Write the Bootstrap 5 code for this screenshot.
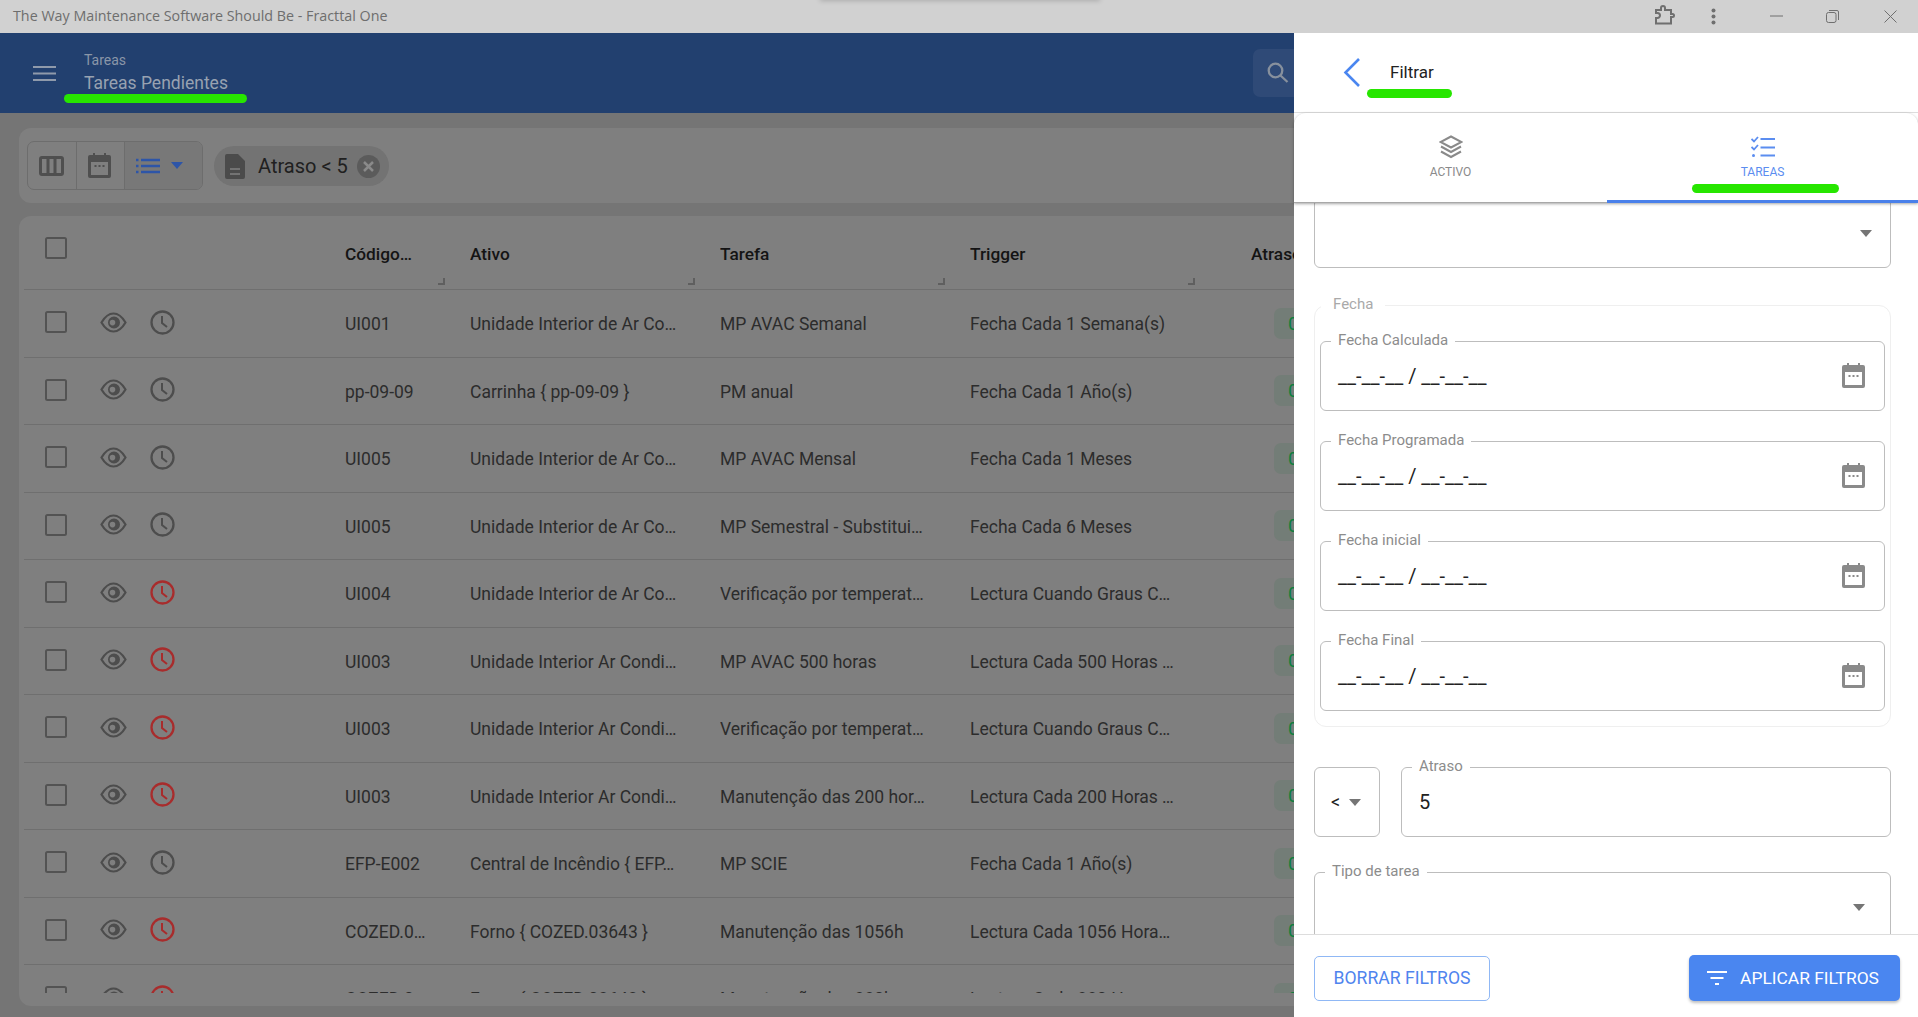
<!DOCTYPE html>
<html lang="es">
<head>
<meta charset="utf-8">
<title>Fractal One</title>
<link rel="stylesheet" href="https://cdn.jsdelivr.net/npm/bootstrap@5.3.0/dist/css/bootstrap.min.css">
<style>
html,body{height:100%;}
body{font-family:Roboto,"Liberation Sans",sans-serif;background:#757575;overflow:hidden;}
.app-frame{height:1017px;width:1918px;overflow:hidden;}
.win-bar{height:33px;background:#d1d1d1;color:#6e6e6e;font:14.3px/1 "Open Sans",sans-serif;padding:0 0 0 13px;}
.win-glow{position:absolute;left:820px;top:-6px;width:280px;height:6px;box-shadow:0 1px 5px rgba(0,0,0,.18);}
.win-btns{color:#6f6f6f;}
.win-btns svg{position:absolute;}
.w-puz{left:1654px;top:5px;}
.w-dots{left:1711px;top:8px;}
.w-min{left:1770px;top:15px;}
.w-res{left:1826px;top:10px;}
.w-cls{left:1884px;top:10px;}
.app-head{height:80px;background:#22406f;position:relative;flex:none;}
.burger{position:absolute;left:33px;top:33px;color:#8f9aab;}
.head-titles{position:absolute;left:84px;top:17px;}
.head-sup{font-size:14px;line-height:20px;color:#8a96a8;}
.head-main{font-size:17.5px;line-height:24px;margin-top:1px;color:#98a2b1;}
.search-box{position:absolute;left:1253px;top:16px;width:80px;height:48px;background:#2f4a77;border-radius:7px;color:#87909d;}
.search-box svg{position:absolute;left:13px;top:12px;}
.main-area{flex:1;background:#757575;padding:15px 0 0 19px;min-height:0;}
.tool-card{height:75px;width:1880px;background:#7f7f7f;border-radius:12px;padding:13px 0 0 8px;}
.tool-grp{height:49px;width:176px;border:1px solid #6d6d6d;border-radius:7px;overflow:hidden;}
.tool-cell{height:100%;display:flex;align-items:center;justify-content:center;color:#4f4f4f;border-right:1px solid #6d6d6d;padding-right:2px;}
.tc-a{width:49px;}
.tc-b{width:48px;}
.tc-c{flex:1;background:#787878;border-right:0;color:#2d55a8;gap:11px;padding-right:8px;}
.caret-d{width:0;height:0;border-left:6px solid transparent;border-right:6px solid transparent;border-top:7px solid currentColor;display:block;}
.flt-chip{margin:5px 0 0 11px;height:40px;width:175px;background:#737373;border-radius:20px;color:#202020;font-size:20px;padding-left:11px;}
.flt-chip .chip-doc{color:#4b4b4b;margin-right:13px;flex:none;}
.chip-x{margin-left:9px;color:#5b5b5b;flex:none;}
.grid-card{margin-top:13px;height:790px;width:1880px;background:#7f7f7f;border-radius:12px;padding:0 0 13px 5px;}
.grid-clip{height:777px;overflow:hidden;}
.grid-tbl{table-layout:fixed;width:1496px;margin:0;border-collapse:separate;border-spacing:0;--bs-table-bg:transparent;--bs-table-color:#2c2c2c;}
.grid-tbl th,.grid-tbl td{padding:0;vertical-align:middle;white-space:nowrap;overflow:hidden;border-bottom:1px solid #6f6f6f;box-shadow:none;}
.grid-tbl th{height:74px;font-weight:500;font-size:17.3px;color:#141414;position:relative;padding-top:4px;}
.grid-tbl td{height:67.5px;font-size:17.5px;color:#2c2c2c;padding-top:2px;}
.c-act{width:321px;}
.c-cod{width:125px;}
.c-lng{width:250px;}
.c-trg{width:281px;}
.c-atr{width:269px;}
.act-flex{display:flex;align-items:center;height:100%;padding-left:21px;color:#4d4d4d;position:relative;top:-2px;}
.chk-box{width:22px;height:22px;border:2.5px solid #535353;border-radius:2.5px;flex:none;}
.ico-eye{margin-left:33px;flex:none;}
.ico-clk{margin-left:23px;flex:none;}
.clk-red{color:#a82c2c;}
.head-chk{position:absolute;left:21px;top:21px;}
.rsz{position:absolute;right:25px;bottom:4px;width:7px;height:7px;border-right:2px solid #5f5f5f;border-bottom:2px solid #5f5f5f;}
.rsz-trg{right:56px;}
.late-chip{margin:-2px 0 0 23px;width:80px;height:31px;line-height:31px;background:#737d77;border-radius:7px;color:#0d7f3e;font-size:19px;padding-left:14px;}
.side-panel{position:absolute;right:0;top:33px;bottom:0;width:624px;background:#fff;display:flex;flex-direction:column;}
.side-head{height:80px;flex:none;border-bottom:1px solid #ddd;position:relative;font-size:17px;color:#222;}
.back-ico{position:absolute;left:49px;top:24px;color:#4a86f0;}
.side-ttl{position:absolute;left:96px;top:27px;line-height:24px;}
.side-tabs{height:90px;flex:none;position:relative;z-index:2;box-shadow:0 1px 3px rgba(0,0,0,.35);flex-wrap:nowrap;border-radius:12px 12px 0 0;}
.side-tabs .nav-link{padding:22px 0 0;height:90px;text-align:center;font-size:12px;line-height:16px;color:#8a8a8a;border-bottom:1px solid #a8a8a8;}
.tab-a{width:313px;}
.tab-b{width:311px;}
.side-tabs .tab-b{color:#5b8df0;border-bottom:3px solid #4a80ea;}
.side-tabs svg{display:block;margin:0 auto 5px;}
.side-body{height:731px;flex:none;overflow:hidden;padding:0 27px 0 20px;}
.side-scroll{margin-top:-5px;display:flex;flex-direction:column;}
.fld{height:70px;border:1px solid #bdbdbd;border-radius:6px;position:relative;flex:none;color:#222;font-size:20px;}
.fld-lbl{position:absolute;top:-12px;left:10px;background:#fff;padding:0 7px;font-size:15px;line-height:20px;color:#8c8c8c;}
.fld-val{position:absolute;left:17px;top:22px;line-height:24px;white-space:pre;}
.fld-cal{position:absolute;right:19px;top:21px;color:#8a8a8a;}
.fld-arrow{position:absolute;top:31px;right:18px;color:#757575;}
.arrow-wide{right:25px;}
.grp-fecha{margin-top:37px;height:422px;border:1px solid #efefef;border-radius:12px;padding:35px 5px 0;display:flex;flex-direction:column;gap:30px;position:relative;}
.grp-lbl{position:absolute;top:-12px;left:6px;background:#fff;padding:0 12px;font-size:15px;line-height:20px;color:#a9a9a9;}
.cmp-row{margin-top:40px;gap:21px;}
.cmp-op{width:66px;}
.cmp-val{flex:1;}
.op-txt{position:absolute;left:16px;top:22px;line-height:24px;font-size:18px;}
.tipo-fld{margin-top:35px;}
.side-foot{flex:1;border-top:1px solid #ddd;padding:20px 18px 0 20px;background:#fff;position:relative;z-index:2;}
.foot-out{width:176px;height:45px;margin-top:1px;border:1px solid #90b8f5;border-radius:5px;color:#4f84ee;background:#fff;font-size:17.6px;line-height:43px;padding:0;}
.foot-fill{width:211px;height:46px;border:0;border-radius:5px;background:#4a86f0;color:#fff;font-size:17.4px;padding:0 3px 0 0;box-shadow:0 2px 3px rgba(0,0,0,.25);gap:13px;}
.gmark{position:absolute;background:#27e600;border-radius:5px;z-index:5;}
.gm-a{left:64px;top:94px;width:183px;height:9px;}
.gm-b{left:1367px;top:89px;width:85px;height:9px;}
.gm-c{left:1692px;top:184px;width:147px;height:9px;}
</style>
</head>
<body>
<svg width="0" height="0" class="position-absolute">
  <defs>
    <symbol id="i-eye" viewBox="0 0 27 21"><path d="M1.500 10.500C5 4.500 9 1.500 13.500 1.500S22 4.500 25.500 10.500C22 16.500 18 19.500 13.500 19.500S5 16.500 1.500 10.500Z" fill="none" stroke="currentColor" stroke-width="2.200"/><path fill-rule="evenodd" d="M14 4.500a6 6 0 1 1 0 12a6 6 0 1 1 0-12ZM12.500 7.800a2.800 2.800 0 1 0 0 5.600a2.800 2.800 0 1 0 0-5.600Z" fill="currentColor"/></symbol>
    <symbol id="i-clk" viewBox="0 0 25 25"><circle cx="12.500" cy="12.500" r="11" fill="none" stroke="currentColor" stroke-width="2.300"/><path d="M12 6v7l5 4" fill="none" stroke="currentColor" stroke-width="2"/></symbol>
    <symbol id="i-cal" viewBox="0 0 23 25"><path fill-rule="evenodd" d="M5 0h2v2h9V0h2v2h3a2 2 0 0 1 2 2v19a2 2 0 0 1-2 2H2a2 2 0 0 1-2-2V4a2 2 0 0 1 2-2h3ZM3 9v13h17V9Z" fill="currentColor"/><rect x="6.500" y="12" width="2" height="2" fill="currentColor"/><rect x="10.500" y="12" width="2" height="2" fill="currentColor"/><rect x="14.500" y="12" width="2" height="2" fill="currentColor"/></symbol>
  </defs>
</svg>
<div class="app-frame d-flex flex-column position-relative">
  <div class="win-bar d-flex align-items-center flex-none position-relative">
    <span>The Way Maintenance Software Should Be - Fracttal One</span>
    <div class="win-glow"></div>
    <div class="win-btns">
      <svg class="w-puz" width="21" height="20" viewBox="0 0 21 20"><path d="M2 5h5V3a2 2 0 0 1 4 0v2h6v4h1.500a1.500 1.500 0 0 1 0 3H17v6.500H2v-5.500h1.500a2.500 2.500 0 0 0 0-5H2Z" fill="none" stroke="currentColor" stroke-width="2"/></svg>
      <svg class="w-dots" width="5" height="17" viewBox="0 0 5 17"><circle cx="2.500" cy="2.500" r="2" fill="currentColor"/><circle cx="2.500" cy="8.500" r="2" fill="currentColor"/><circle cx="2.500" cy="14.500" r="2" fill="currentColor"/></svg>
      <svg class="w-min" width="13" height="2" viewBox="0 0 13 2"><path d="M0 1h13" stroke="currentColor"/></svg>
      <svg class="w-res" width="13" height="13" viewBox="0 0 13 13"><rect x=".5" y="2.500" width="9.500" height="10" rx="2" fill="none" stroke="currentColor"/><path d="M3 .5h8a1.500 1.500 0 0 1 1.500 1.500v8" fill="none" stroke="currentColor"/></svg>
      <svg class="w-cls" width="13" height="13" viewBox="0 0 13 13"><path d="M.5.500l12 12M12.500.500l-12 12" stroke="currentColor"/></svg>
    </div>
  </div>
  <header class="app-head">
    <svg class="burger" width="23" height="15" viewBox="0 0 23 15"><path d="M0 1h23M0 7.500h23M0 14h23" stroke="currentColor" stroke-width="2"/></svg>
    <div class="head-titles">
      <div class="head-sup">Tareas</div>
      <div class="head-main">Tareas Pendientes</div>
    </div>
    <div class="search-box"><svg width="24" height="24" viewBox="0 0 24 24"><circle cx="9.500" cy="9.500" r="6.800" fill="none" stroke="currentColor" stroke-width="2.300"/><path d="M14.500 14.500l7 6.500" stroke="currentColor" stroke-width="2.300"/></svg></div>
  </header>
  <main class="main-area">
    <div class="tool-card d-flex">
      <div class="tool-grp d-flex">
        <div class="tool-cell tc-a"><svg width="25" height="20" viewBox="0 0 25 20"><rect x="1.500" y="1.500" width="22" height="17" rx="1.500" fill="none" stroke="currentColor" stroke-width="3"/><path d="M9 1v18M16 1v18" stroke="currentColor" stroke-width="3"/></svg></div>
        <div class="tool-cell tc-b"><svg width="23" height="25"><use href="#i-cal"/></svg></div>
        <div class="tool-cell tc-c"><svg width="24" height="16" viewBox="0 0 24 16"><path d="M5 2h19M5 8h19M5 14h19" stroke="currentColor" stroke-width="2.400"/><path d="M0 2h2.500M0 8h2.500M0 14h2.500" stroke="currentColor" stroke-width="2.400"/></svg><span class="caret-d"></span></div>
      </div>
      <div class="flt-chip d-flex align-items-center">
        <svg class="chip-doc" width="20" height="25" viewBox="0 0 20 25"><path fill-rule="evenodd" d="M2 0h11l7 7v16a2 2 0 0 1-2 2H2a2 2 0 0 1-2-2V2a2 2 0 0 1 2-2ZM5 14v2h10v-2ZM5 19v2h10v-2Z" fill="currentColor"/></svg>
        <span>Atraso &lt; 5</span>
        <svg class="chip-x" width="23" height="23" viewBox="0 0 23 23"><circle cx="11.500" cy="11.500" r="11.500" fill="currentColor"/><path d="M7 7l9 9M16 7l-9 9" stroke="#8a8a8a" stroke-width="2.500"/></svg>
      </div>
    </div>
    <div class="grid-card">
      <div class="grid-clip">
        <table class="table grid-tbl">
          <colgroup><col class="c-act"><col class="c-cod"><col class="c-lng"><col class="c-lng"><col class="c-trg"><col class="c-atr"></colgroup>
          <thead><tr>
            <th><span class="chk-box head-chk d-block"></span></th>
            <th>Código…<span class="rsz"></span></th>
            <th>Ativo<span class="rsz"></span></th>
            <th>Tarefa<span class="rsz"></span></th>
            <th>Trigger<span class="rsz rsz-trg"></span></th>
            <th>Atraso</th>
          </tr></thead>
          <tbody>
            <tr><td><div class="act-flex"><span class="chk-box"></span><svg class="ico-eye" width="27" height="21"><use href="#i-eye"/></svg><svg class="ico-clk" width="25" height="25"><use href="#i-clk"/></svg></div></td><td>UI001</td><td>Unidade Interior de Ar Co…</td><td>MP AVAC Semanal</td><td>Fecha Cada 1 Semana(s)</td><td><div class="late-chip">0</div></td></tr>
            <tr><td><div class="act-flex"><span class="chk-box"></span><svg class="ico-eye" width="27" height="21"><use href="#i-eye"/></svg><svg class="ico-clk" width="25" height="25"><use href="#i-clk"/></svg></div></td><td>pp-09-09</td><td>Carrinha { pp-09-09 }</td><td>PM anual</td><td>Fecha Cada 1 Año(s)</td><td><div class="late-chip">0</div></td></tr>
            <tr><td><div class="act-flex"><span class="chk-box"></span><svg class="ico-eye" width="27" height="21"><use href="#i-eye"/></svg><svg class="ico-clk" width="25" height="25"><use href="#i-clk"/></svg></div></td><td>UI005</td><td>Unidade Interior de Ar Co…</td><td>MP AVAC Mensal</td><td>Fecha Cada 1 Meses</td><td><div class="late-chip">0</div></td></tr>
            <tr><td><div class="act-flex"><span class="chk-box"></span><svg class="ico-eye" width="27" height="21"><use href="#i-eye"/></svg><svg class="ico-clk" width="25" height="25"><use href="#i-clk"/></svg></div></td><td>UI005</td><td>Unidade Interior de Ar Co…</td><td>MP Semestral - Substitui…</td><td>Fecha Cada 6 Meses</td><td><div class="late-chip">0</div></td></tr>
            <tr><td><div class="act-flex"><span class="chk-box"></span><svg class="ico-eye" width="27" height="21"><use href="#i-eye"/></svg><svg class="ico-clk clk-red" width="25" height="25"><use href="#i-clk"/></svg></div></td><td>UI004</td><td>Unidade Interior de Ar Co…</td><td>Verificação por temperat…</td><td>Lectura Cuando Graus C…</td><td><div class="late-chip">0</div></td></tr>
            <tr><td><div class="act-flex"><span class="chk-box"></span><svg class="ico-eye" width="27" height="21"><use href="#i-eye"/></svg><svg class="ico-clk clk-red" width="25" height="25"><use href="#i-clk"/></svg></div></td><td>UI003</td><td>Unidade Interior Ar Condi…</td><td>MP AVAC 500 horas</td><td>Lectura Cada 500 Horas …</td><td><div class="late-chip">0</div></td></tr>
            <tr><td><div class="act-flex"><span class="chk-box"></span><svg class="ico-eye" width="27" height="21"><use href="#i-eye"/></svg><svg class="ico-clk clk-red" width="25" height="25"><use href="#i-clk"/></svg></div></td><td>UI003</td><td>Unidade Interior Ar Condi…</td><td>Verificação por temperat…</td><td>Lectura Cuando Graus C…</td><td><div class="late-chip">0</div></td></tr>
            <tr><td><div class="act-flex"><span class="chk-box"></span><svg class="ico-eye" width="27" height="21"><use href="#i-eye"/></svg><svg class="ico-clk clk-red" width="25" height="25"><use href="#i-clk"/></svg></div></td><td>UI003</td><td>Unidade Interior Ar Condi…</td><td>Manutenção das 200 hor…</td><td>Lectura Cada 200 Horas …</td><td><div class="late-chip">0</div></td></tr>
            <tr><td><div class="act-flex"><span class="chk-box"></span><svg class="ico-eye" width="27" height="21"><use href="#i-eye"/></svg><svg class="ico-clk" width="25" height="25"><use href="#i-clk"/></svg></div></td><td>EFP-E002</td><td>Central de Incêndio { EFP…</td><td>MP SCIE</td><td>Fecha Cada 1 Año(s)</td><td><div class="late-chip">0</div></td></tr>
            <tr><td><div class="act-flex"><span class="chk-box"></span><svg class="ico-eye" width="27" height="21"><use href="#i-eye"/></svg><svg class="ico-clk clk-red" width="25" height="25"><use href="#i-clk"/></svg></div></td><td>COZED.0…</td><td>Forno { COZED.03643 }</td><td>Manutenção das 1056h</td><td>Lectura Cada 1056 Hora…</td><td><div class="late-chip">0</div></td></tr>
            <tr><td><div class="act-flex"><span class="chk-box"></span><svg class="ico-eye" width="27" height="21"><use href="#i-eye"/></svg><svg class="ico-clk clk-red" width="25" height="25"><use href="#i-clk"/></svg></div></td><td>COZED.0…</td><td>Forno { COZED.03643 }</td><td>Manutenção das 880h</td><td>Lectura Cada 880 Horas</td><td><div class="late-chip">0</div></td></tr>
          </tbody>
        </table>
      </div>
    </div>
  </main>
  <aside class="side-panel">
    <div class="side-head">
      <svg class="back-ico" width="18" height="31" viewBox="0 0 18 31"><path d="M16 2L2.500 15.500 16 29" fill="none" stroke="currentColor" stroke-width="2.600"/></svg>
      <div class="side-ttl">Filtrar</div>
    </div>
    <nav class="nav side-tabs">
      <a class="nav-link tab-a" href="#"><svg width="24" height="24" viewBox="0 0 24 24"><path d="M12 1.500L22.500 7 12 12.500 1.500 7Z" fill="none" stroke="currentColor" stroke-width="2"/><path d="M2 11.500l10 5.500 10-5.500M2 16.500l10 5.500 10-5.500" fill="none" stroke="currentColor" stroke-width="2"/></svg>ACTIVO</a>
      <a class="nav-link tab-b" href="#"><svg width="24" height="24" viewBox="0 0 24 24"><path d="M.5 4l2.500 2.500L7 2M.5 12l2.500 2.500L7 10" fill="none" stroke="currentColor" stroke-width="1.800"/><circle cx="2.500" cy="20.500" r="1.500" fill="currentColor"/><path d="M9.500 4H24M9.500 12.500H24M9.500 20.500H24" stroke="currentColor" stroke-width="2"/></svg>TAREAS</a>
    </nav>
    <div class="side-body">
      <div class="side-scroll">
        <div class="fld"><span class="caret-d fld-arrow"></span></div>
        <div class="grp-fecha">
          <span class="grp-lbl">Fecha</span>
          <div class="fld"><span class="fld-lbl">Fecha Calculada</span><span class="fld-val">__-__-__ / __-__-__</span><svg class="fld-cal" width="23" height="25"><use href="#i-cal"/></svg></div>
          <div class="fld"><span class="fld-lbl">Fecha Programada</span><span class="fld-val">__-__-__ / __-__-__</span><svg class="fld-cal" width="23" height="25"><use href="#i-cal"/></svg></div>
          <div class="fld"><span class="fld-lbl">Fecha inicial</span><span class="fld-val">__-__-__ / __-__-__</span><svg class="fld-cal" width="23" height="25"><use href="#i-cal"/></svg></div>
          <div class="fld"><span class="fld-lbl">Fecha Final</span><span class="fld-val">__-__-__ / __-__-__</span><svg class="fld-cal" width="23" height="25"><use href="#i-cal"/></svg></div>
        </div>
        <div class="cmp-row d-flex">
          <div class="fld cmp-op"><span class="op-txt">&lt;</span><span class="caret-d fld-arrow"></span></div>
          <div class="fld cmp-val"><span class="fld-lbl">Atraso</span><span class="fld-val">5</span></div>
        </div>
        <div class="fld tipo-fld"><span class="fld-lbl">Tipo de tarea</span><span class="caret-d fld-arrow arrow-wide"></span></div>
      </div>
    </div>
    <div class="side-foot d-flex justify-content-between align-items-start">
      <button type="button" class="btn foot-out">BORRAR FILTROS</button>
      <button type="button" class="btn foot-fill d-flex align-items-center justify-content-center"><svg width="20" height="16" viewBox="0 0 20 16"><path d="M0 2h20M3.500 8h13M8 14h4" stroke="#fff" stroke-width="2.200"/></svg><span>APLICAR FILTROS</span></button>
    </div>
  </aside>
  <div class="gmark gm-a"></div>
  <div class="gmark gm-b"></div>
  <div class="gmark gm-c"></div>
</div>
<script src="https://cdn.jsdelivr.net/npm/bootstrap@5.3.0/dist/js/bootstrap.bundle.min.js"></script>
</body>
</html>
